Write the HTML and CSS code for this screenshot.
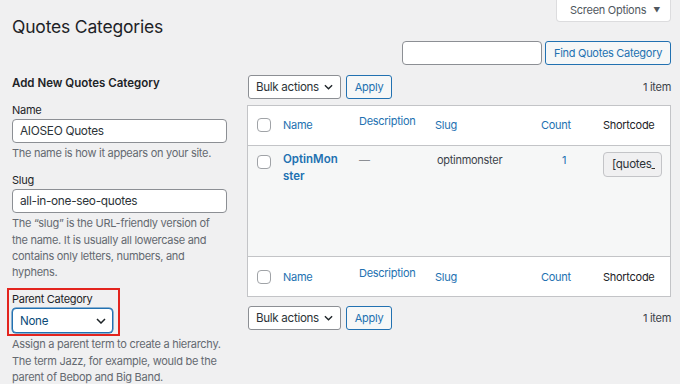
FILE: index.html
```html
<!DOCTYPE html>
<html>
<head>
<meta charset="utf-8">
<link rel="stylesheet" href="styles.css">
</head>
<body>
<div class="wrap">
  <div class="topbar">
    <h1 class="title">Quotes Categories</h1>
    <button class="screen-options">Screen Options <span class="tri">▼</span></button>
  </div>
  <div class="search-row">
    <input class="search-input" type="text">
    <button class="btn find">Find Quotes Category</button>
  </div>
  <div class="cols">
    <div class="col-left">
      <h2 class="form-title">Add New Quotes Category</h2>
      <div class="field">
        <label class="lbl">Name</label>
        <div class="input">AIOSEO Quotes</div>
        <p class="help">The name is how it appears on your site.</p>
      </div>
      <div class="field">
        <label class="lbl">Slug</label>
        <div class="input">all-in-one-seo-quotes</div>
        <p class="help">The “slug” is the URL-friendly version of the name. It is usually all lowercase and contains only letters, numbers, and hyphens.</p>
      </div>
      <div class="field parent">
        <div class="highlight">
          <label class="lbl">Parent Category</label>
          <div class="select focus"><span>None</span>
            <svg class="chev" width="10" height="6" viewBox="0 0 10 6"><path d="M1 1l4 4 4-4" fill="none" stroke="#1d2327" stroke-width="1.5"/></svg>
          </div>
        </div>
        <p class="help help-parent">Assign a parent term to create a hierarchy. The term Jazz, for example, would be the parent of Bebop and Big Band.</p>
      </div>
    </div>
    <div class="col-right">
      <div class="tablenav">
        <div class="select bulk"><span>Bulk actions</span>
          <svg class="chev" width="9" height="6" viewBox="0 0 10 6"><path d="M1 1l4 4 4-4" fill="none" stroke="#1d2327" stroke-width="1.5"/></svg>
        </div>
        <button class="btn apply">Apply</button>
        <span class="count-items">1 item</span>
      </div>
      <div class="tbl">
        <div class="row head">
          <div class="cell"><span class="cb"></span></div>
          <div class="cell link">Name</div>
          <div class="cell link up">Description</div>
          <div class="cell link">Slug</div>
          <div class="cell link">Count</div>
          <div class="cell dark">Shortcode</div>
        </div>
        <div class="row body">
          <div class="cell"><span class="cb"></span></div>
          <div class="cell name-cell">OptinMon<wbr>ster</div>
          <div class="cell muted">—</div>
          <div class="cell slug-cell">optinmonster</div>
          <div class="cell link num">1</div>
          <div class="cell"><div class="sc-input"><div class="sc-clip">[quotes_</div></div></div>
        </div>
        <div class="row head foot">
          <div class="cell"><span class="cb"></span></div>
          <div class="cell link">Name</div>
          <div class="cell link up">Description</div>
          <div class="cell link">Slug</div>
          <div class="cell link">Count</div>
          <div class="cell dark">Shortcode</div>
        </div>
      </div>
      <div class="tablenav bottom">
        <div class="select bulk"><span>Bulk actions</span>
          <svg class="chev" width="9" height="6" viewBox="0 0 10 6"><path d="M1 1l4 4 4-4" fill="none" stroke="#1d2327" stroke-width="1.5"/></svg>
        </div>
        <button class="btn apply">Apply</button>
        <span class="count-items">1 item</span>
      </div>
    </div>
  </div>
</div>
</body>
</html>
```
FILE: styles.css
```css
* { box-sizing: border-box; }
html, body { margin: 0; padding: 0; background: #f0f0f1; }
body {
  font-family: Inter, "Noto Sans", sans-serif;
  font-size: 11px;
  letter-spacing: -0.28px;
  color: #1d2327;
  overflow: hidden;
  height: 384px;
}
.wrap { padding: 0 9px 0 12px; }

/* top */
.topbar { display: flex; justify-content: space-between; align-items: flex-start; height: 41px; }
.title { margin: 0; padding-top: 13px; font-size: 17.5px; letter-spacing: -0.19px; font-weight: 400; line-height: 28px; color: #1d2327; }
.screen-options {
  font: inherit; letter-spacing: inherit; color: #50575e; background: #fff;
  border: 1px solid #dcdcde; border-top: 0; border-radius: 0 0 4px 4px;
  width: 115px; height: 22px; padding: 0 0 1px 3px;
  display: flex; align-items: center; justify-content: center; gap: 7px;
}
.tri { font-size: 7px; color: #50575e; }
.search-row { display: flex; justify-content: flex-end; gap: 3px; height: 24px; }
.search-input { width: 140px; height: 24px; border: 1px solid #8c8f94; border-radius: 4px; background: #fff; margin: 0; }
.btn {
  font: inherit; letter-spacing: inherit; color: #2271b1; background: #f6f7f7;
  border: 1px solid #2271b1; border-radius: 3px; height: 24px; padding: 0; margin: 0;
}
.btn.find { width: 126px; }
.btn.apply { width: 46px; }

/* columns */
.cols { display: flex; gap: 20px; margin-top: 10px; }
.col-left { width: 215px; flex: none; }
.col-right { width: 424px; flex: none; }

.form-title { margin: 0 0 11px 0; font-size: 11.5px; letter-spacing: 0; font-weight: 600; line-height: 16px; }
.lbl { display: block; line-height: 16px; margin-bottom: 1px; color: #1d2327; }
.input {
  height: 24px; border: 1px solid #8c8f94; border-radius: 4px; background: #fff;
  padding: 0 7px; line-height: 22px; font-size: 11.85px; letter-spacing: -0.3px; color: #2c3338;
}
.help { margin: 2px 0 0 0; color: #646970; line-height: 16.3px; }
.help.help-parent { margin-top: 0; }
.field + .field { margin-top: 11px; }
.field.parent { margin-top: 8px; }
.highlight {
  width: 113px; margin-left: -5px;
  border: 2px solid #e3241e; padding: 0 3px 1px 3px;
}
.highlight .lbl { padding-top: 1px; }
.select {
  display: flex; align-items: center; justify-content: space-between;
  border: 1px solid #8c8f94; border-radius: 4px; background: #fff;
  font-size: 11.6px; letter-spacing: -0.3px; color: #2c3338; white-space: nowrap;
}
.select.focus { width: 101px; height: 25px; border: 1.5px solid #2271b1; box-shadow: 0 0 0 0.5px #2271b1; color: #0a4b78; padding: 0 6px 0 7px; }
.chev { flex: none; }

/* table nav */
.tablenav { display: flex; align-items: center; gap: 5px; height: 24px; padding-left: 1px; }
.select.bulk { width: 93px; height: 24px; padding: 0 7px 0 7px; border-radius: 3px; }
.count-items { margin-left: auto; color: #3c434a; }
.tablenav.bottom { margin-top: 9px; }

/* table */
.tbl { margin-top: 6px; border: 1px solid #c3c4c7; background: #fff; }
.row { display: grid; grid-template-columns: 35px 76px 76px 106px 62px 1fr; }
.row.head { height: 40px; align-items: center; border-bottom: 1px solid #c3c4c7; }
.row.head .cell { padding-bottom: 1px; }
.row.foot { border-bottom: 0; border-top: 1px solid #c3c4c7; }
.row.foot .cell { padding-bottom: 0; padding-top: 1px; }
.row.body { height: 110px; background: #f6f7f7; align-items: start; }
.cell { white-space: nowrap; }
.link { color: #2271b1; }
.dark { color: #1d2327; }
.row.head .up { margin-bottom: 8px; }
.cb {
  display: block; width: 14px; height: 14px; margin-left: 9px;
  border: 1px solid #a0a3a7; border-radius: 4px; background: #fff;
}
.row.body .cell { padding-top: 6px; line-height: 17px; }
.row.body .cell:first-child { padding-top: 9px; }
.row.body .name-cell {
  white-space: normal; color: #2271b1; font-weight: 600; letter-spacing: 0; font-size: 11.5px;
  padding-right: 14px; padding-top: 5px;
}
.muted { color: #8c8f94; }
.slug-cell { color: #3c434a; padding-left: 2px; }
.row.body .num { padding-left: 21px; }
.row.body .cell:last-child { padding-top: 6px; }
.sc-input {
  width: 59px; height: 25px; border: 1px solid #c3c4c7; border-radius: 4px; background: #f0f0f1;
  padding: 0 6px 0 8px;
}
.sc-clip { overflow: hidden; white-space: nowrap; line-height: 23px; color: #2c3338; font-size: 11.6px; letter-spacing: -0.3px; }
```
